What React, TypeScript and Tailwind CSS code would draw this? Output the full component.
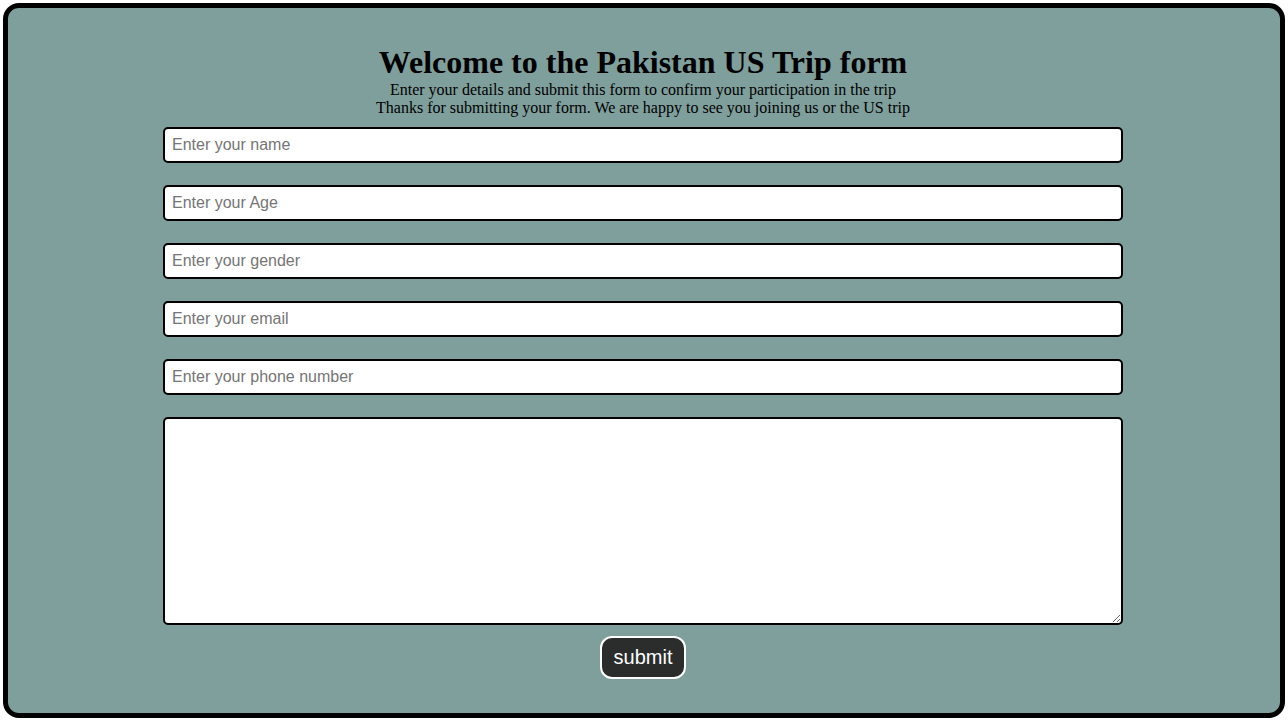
export default function App() {
  const fields = [
    "Enter your name",
    "Enter your Age",
    "Enter your gender",
    "Enter your email",
    "Enter your phone number",
  ]

  return (
    <div className="w-[1288px] h-[722px] bg-white p-[3px] pb-[4px]">
      <div className="h-full rounded-[16px] border-[5px] border-black bg-[#7f9f9c] flex flex-col items-center pt-[36px] pr-[2px]">
        <h1 className="font-['Liberation_Serif',serif] text-[32px] font-bold leading-[37px] text-black">
          Welcome to the Pakistan US Trip form
        </h1>
        <p className="font-['Liberation_Serif',serif] text-[16px] leading-[18px] text-black">
          Enter your details and submit this form to confirm your participation in the trip
        </p>
        <p className="font-['Liberation_Serif',serif] text-[16px] leading-[18px] text-black">
          Thanks for submitting your form. We are happy to see you joining us or the US trip
        </p>
        <form className="mt-[10px] w-[960px] flex flex-col gap-[22px]">
          {fields.map((f) => (
            <input
              key={f}
              type="text"
              placeholder={f}
              className="h-[36px] w-full rounded-[5px] border-2 border-black bg-white px-[7px] font-['Liberation_Sans',Arial,sans-serif] text-[16px] text-black placeholder:text-[#757575] outline-none"
            />
          ))}
          <textarea className="h-[208px] w-full rounded-[5px] border-2 border-black bg-white px-[7px] py-1 font-['Liberation_Sans',Arial,sans-serif] text-[16px] outline-none" />
        </form>
        <button
          type="button"
          className="mt-[11px] h-[43px] w-[86px] rounded-[12px] border-2 border-white bg-[#2b2d2d] pb-[2px] font-['Liberation_Sans',Arial,sans-serif] text-[20px] text-white"
        >
          submit
        </button>
      </div>
    </div>
  )
}
